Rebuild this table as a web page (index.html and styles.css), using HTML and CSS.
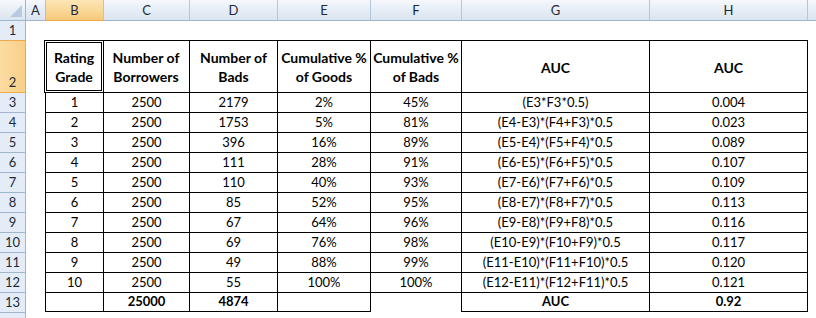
FILE: index.html
```html
<!DOCTYPE html>
<html>
<head>
<meta charset="utf-8">
<link rel="stylesheet" href="styles.css">
</head>
<body>
<div class="sheet">
  <div class="corner"><svg width="25" height="20" viewBox="0 0 25 20"><polygon points="22,5 22,17 10,17" fill="#b8cae2"/></svg></div>
  <div class="ch">A</div><div class="ch sel sep">B</div><div class="ch sep">C</div><div class="ch sep">D</div><div class="ch sep">E</div><div class="ch sep">F</div><div class="ch sep">G</div><div class="ch sep">H</div><div class="ch sep"></div>

  <div class="rh first">1</div><div></div><div></div><div></div><div></div><div></div><div></div><div></div><div></div><div></div>

  <div class="rh sel">2</div><div></div>
  <div class="t hd b2">Rating<br>Grade</div>
  <div class="t hd c2">Number of<br>Borrowers</div>
  <div class="t hd">Number of<br>Bads</div>
  <div class="t hd">Cumulative %<br>of Goods</div>
  <div class="t hd">Cumulative %<br>of Bads</div>
  <div class="t hd">AUC</div>
  <div class="t hd">AUC</div>
  <div class="edge"></div>

  <div class="rh after">3</div><div></div><div class="t b3">1</div><div class="t">2500</div><div class="t">2179</div><div class="t">2%</div><div class="t">45%</div><div class="t">(E3*F3*0.5)</div><div class="t">0.004</div><div class="edge"></div>
  <div class="rh">4</div><div></div><div class="t">2</div><div class="t">2500</div><div class="t">1753</div><div class="t">5%</div><div class="t">81%</div><div class="t">(E4-E3)*(F4+F3)*0.5</div><div class="t">0.023</div><div class="edge"></div>
  <div class="rh">5</div><div></div><div class="t">3</div><div class="t">2500</div><div class="t">396</div><div class="t">16%</div><div class="t">89%</div><div class="t">(E5-E4)*(F5+F4)*0.5</div><div class="t">0.089</div><div class="edge"></div>
  <div class="rh">6</div><div></div><div class="t">4</div><div class="t">2500</div><div class="t">111</div><div class="t">28%</div><div class="t">91%</div><div class="t">(E6-E5)*(F6+F5)*0.5</div><div class="t">0.107</div><div class="edge"></div>
  <div class="rh">7</div><div></div><div class="t">5</div><div class="t">2500</div><div class="t">110</div><div class="t">40%</div><div class="t">93%</div><div class="t">(E7-E6)*(F7+F6)*0.5</div><div class="t">0.109</div><div class="edge"></div>
  <div class="rh">8</div><div></div><div class="t">6</div><div class="t">2500</div><div class="t">85</div><div class="t">52%</div><div class="t">95%</div><div class="t">(E8-E7)*(F8+F7)*0.5</div><div class="t">0.113</div><div class="edge"></div>
  <div class="rh">9</div><div></div><div class="t">7</div><div class="t">2500</div><div class="t">67</div><div class="t">64%</div><div class="t">96%</div><div class="t">(E9-E8)*(F9+F8)*0.5</div><div class="t">0.116</div><div class="edge"></div>
  <div class="rh">10</div><div></div><div class="t">8</div><div class="t">2500</div><div class="t">69</div><div class="t">76%</div><div class="t">98%</div><div class="t">(E10-E9)*(F10+F9)*0.5</div><div class="t">0.117</div><div class="edge"></div>
  <div class="rh">11</div><div></div><div class="t">9</div><div class="t">2500</div><div class="t">49</div><div class="t">88%</div><div class="t">99%</div><div class="t">(E11-E10)*(F11+F10)*0.5</div><div class="t">0.120</div><div class="edge"></div>
  <div class="rh">12</div><div></div><div class="t">10</div><div class="t">2500</div><div class="t">55</div><div class="t">100%</div><div class="t">100%</div><div class="t">(E12-E11)*(F12+F11)*0.5</div><div class="t">0.121</div><div class="edge"></div>
  <div class="rh">13</div><div></div><div class="t last"></div><div class="t last bold">25000</div><div class="t last bold">4874</div><div class="t last"></div><div class="t"></div><div class="t last bold">AUC</div><div class="t last bold">0.92</div><div class="edge"></div>

  <div class="rh"></div><div></div><div></div><div></div><div></div><div></div><div></div><div></div><div></div><div></div>
</div>
</body>
</html>
```

FILE: styles.css
```css
html, body {
  margin: 0;
  padding: 0;
  background: #ffffff;
}

.sheet {
  display: grid;
  grid-template-columns: 26px 19px 58px 86px 88px 93px 91px 188px 158px 1fr;
  grid-template-rows: 21px 19px 52px repeat(11, 20px) 20px;
  width: 816px;
  height: 318px;
  overflow: hidden;
  font-family: "Lato", "Liberation Sans", sans-serif;
  font-size: 13px;
  color: #000;
}

.sheet > div {
  box-sizing: border-box;
  min-width: 0;
}

.corner {
  background: linear-gradient(#f6f9fc, #dbe4ef);
  border-right: 1px solid #9eb6ce;
  border-bottom: 1px solid #9eb6ce;
}

.corner svg {
  display: block;
}

.ch {
  background: linear-gradient(#f5f8fc 0%, #e6edf6 50%, #dbe4ef 100%);
  border-bottom: 1px solid #9eb6ce;
  text-align: center;
  line-height: 20px;
  color: #1e2a3a;
}

.ch.sep {
  border-left: 1px solid #b4c6dc;
}

.ch.sel {
  background: linear-gradient(#fde6b5 0%, #fad89a 50%, #f6c979 100%);
  border-bottom: 1px solid #f0a84a;
  border-left-color: #e8b970;
}

.rh {
  background: #e4ecf7;
  border-right: 1px solid #9eb6ce;
  border-top: 1px solid #9eb6ce;
  display: flex;
  align-items: flex-end;
  justify-content: center;
  line-height: 20px;
  color: #1e2a3a;
}

.rh.first {
  border-top: none;
}

.rh.sel {
  background: linear-gradient(90deg, #fcdca3, #f9cf87);
  border-top-color: #f0a84a;
  border-right-color: #f0a84a;
}

.rh.after {
  border-top-color: #f0a84a;
}

.t {
  border-left: 1px solid #000;
  border-top: 1px solid #000;
  display: flex;
  align-items: flex-end;
  justify-content: center;
  line-height: 19px;
  white-space: nowrap;
}

.t.last {
  border-bottom: 1px solid #000;
}

.bold {
  font-weight: 700;
}

.hd {
  font-weight: 700;
  font-size: 14px;
  line-height: 19px;
  align-items: center;
  text-align: center;
  padding-top: 1px;
}

.b2 {
  border: none;
  position: relative;
}

.b2::after {
  content: "";
  position: absolute;
  left: -1px;
  top: 0;
  right: -1px;
  bottom: -1px;
  border: 3px double #000;
  pointer-events: none;
}

.c2 {
  border-left: none;
}

.b3 {
  border-top: none;
}

.edge {
  border-left: 1px solid #000;
}
```
